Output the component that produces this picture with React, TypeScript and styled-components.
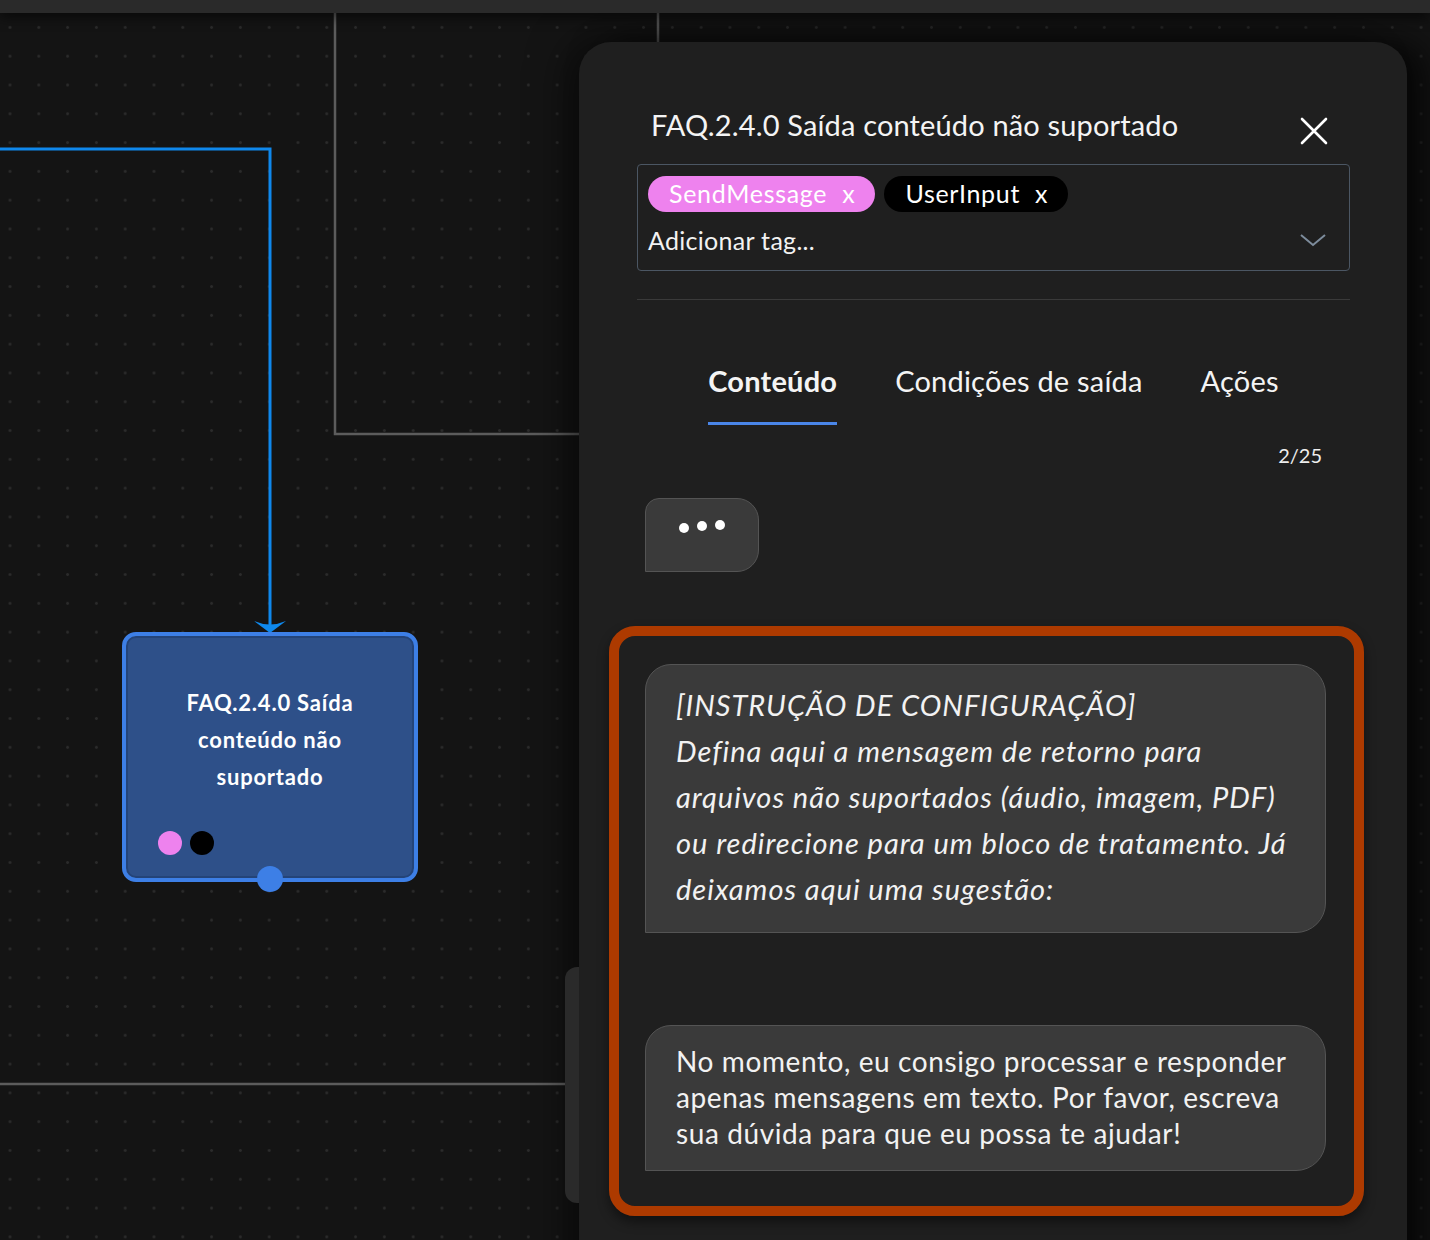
import React from 'react';
import styled, { createGlobalStyle } from 'styled-components';

const GlobalStyle = createGlobalStyle`
  body {
    margin: 0;
    background: #141414;
    font-family: Lato, "Noto Sans", sans-serif;
    color: #ffffff;
  }
`;

const Screen = styled.div`
  width: 1430px;
  height: 1240px;
  display: flex;
  flex-direction: column;
  overflow: hidden;
  position: relative;
`;

const TopBar = styled.div`
  height: 13px;
  flex-shrink: 0;
  background: #2a2a2a;
  box-shadow: 0 3px 14px rgba(0, 0, 0, 0.7);
  z-index: 2;
`;

const Canvas = styled.div`
  flex: 1;
  position: relative;
  background-color: #141414;
  background-image: radial-gradient(circle, #2b2b2b 1.2px, transparent 1.6px);
  background-size: 28.8px 28.8px;
  background-position: -4.4px 0px;
`;

const EdgeLayer = styled.svg`
  position: absolute;
  left: 0;
  top: 0;
  width: 1430px;
  height: 1227px;
`;

const FlowNode = styled.div`
  position: absolute;
  left: 122px;
  top: 619px;
  width: 296px;
  height: 250px;
  box-sizing: border-box;
  border: 4px solid #3d7fe6;
  border-radius: 14px;
  background: #2e5089;
  box-shadow: inset 0 0 0 2px rgba(30, 60, 110, 0.6);
  display: flex;
  flex-direction: column;
  align-items: center;
  padding: 48px 20px 0;
`;

const NodeTitle = styled.div`
  font-weight: 700;
  font-size: 22px;
  letter-spacing: 0.8px;
  line-height: 37px;
  text-align: center;
  width: 220px;
`;

const NodeTags = styled.div`
  position: absolute;
  left: 32px;
  bottom: 23px;
  display: flex;
  gap: 8px;
`;

const TagDot = styled.span<{ $color: string }>`
  width: 24px;
  height: 24px;
  border-radius: 50%;
  background: ${(p) => p.$color};
`;

const NodeHandle = styled.span`
  position: absolute;
  left: 50%;
  bottom: -14px;
  margin-left: -13px;
  width: 26px;
  height: 26px;
  border-radius: 50%;
  background: #3d7fe6;
`;

const Drawer = styled.aside`
  position: absolute;
  left: 579px;
  top: 29px;
  width: 828px;
  height: 1260px;
  box-sizing: border-box;
  background: #1f1f1f;
  border-radius: 32px 32px 0 0;
  box-shadow: -10px 0 40px rgba(0, 0, 0, 0.55), 20px 0 30px rgba(0, 0, 0, 0.6);
  padding: 0 57px 0 58px;
  display: flex;
  flex-direction: column;
`;

const DrawerHandle = styled.div`
  position: absolute;
  left: -14px;
  top: 925px;
  width: 14px;
  height: 236px;
  background: #2a2a2a;
  border-radius: 12px 0 0 12px;
`;

const Header = styled.div`
  margin-top: 64px;
  height: 38px;
  display: flex;
  align-items: center;
  justify-content: space-between;
  padding-left: 14px;
  padding-right: 22px;
`;

const Title = styled.h2`
  margin: 0;
  font-weight: 400;
  font-size: 29px;
  letter-spacing: 0.15px;
  line-height: 38px;
  color: #f4f4f4;
`;

const CloseButton = styled.button`
  border: 0;
  background: none;
  padding: 0;
  margin-top: 12px;
  width: 28px;
  height: 28px;
  display: flex;
  cursor: pointer;
`;

const TagBox = styled.div`
  margin-top: 20px;
  height: 107px;
  box-sizing: border-box;
  border: 1px solid #4b5663;
  border-radius: 4px;
  padding: 11px 22px 0 10px;
  display: flex;
  flex-direction: column;
`;

const TagRow = styled.div`
  display: flex;
  gap: 9px;
`;

const Tag = styled.span<{ $bg: string }>`
  height: 36px;
  border-radius: 18px;
  background: ${(p) => p.$bg};
  padding: 0 20px 0 21px;
  display: inline-flex;
  align-items: center;
  gap: 15px;
  font-size: 25px;
  letter-spacing: 0.7px;
  line-height: 30px;
  color: #ffffff;
  padding-bottom: 3px;
  box-sizing: border-box;
`;

const InputRow = styled.div`
  margin-top: 10px;
  height: 36px;
  display: flex;
  align-items: center;
  justify-content: space-between;
  font-size: 25px;
  letter-spacing: 0.3px;
  color: #f2f2f2;
`;

const Divider = styled.hr`
  margin: 28px 0 0;
  border: 0;
  height: 1px;
  background: #3a3a3a;
`;

const Tabs = styled.nav`
  margin-top: 63px;
  display: flex;
  justify-content: center;
  gap: 58px;
`;

const TabItem = styled.span<{ $active?: boolean }>`
  font-size: 29px;
  letter-spacing: 0.2px;
  line-height: 36px;
  font-weight: ${(p) => (p.$active ? 700 : 400)};
  color: #f4f4f4;
  padding-bottom: 23px;
  border-bottom: 3px solid ${(p) => (p.$active ? '#4a86e8' : 'transparent')};
`;

const Counter = styled.div`
  margin-top: 18px;
  align-self: flex-end;
  margin-right: 28px;
  font-size: 20px;
  line-height: 24px;
  color: #eeeeee;
`;

const TypingBubble = styled.div`
  margin-top: 31px;
  margin-left: 8px;
  width: 114px;
  height: 74px;
  box-sizing: border-box;
  background: #3a3a3a;
  border: 1px solid #545454;
  border-radius: 14px 22px 22px 0;
  display: flex;
  justify-content: center;
  gap: 8px;
  padding-top: 20px;
`;

const TypingDot = styled.span<{ $lift: number }>`
  width: 10px;
  height: 10px;
  border-radius: 50%;
  background: #ffffff;
  margin-top: ${(p) => 4 - p.$lift}px;
`;

const Frame = styled.section`
  margin-top: 54px;
  margin-left: -28px;
  width: 755px;
  box-sizing: border-box;
  border: 10px solid #ad3a00;
  border-radius: 26px;
  padding: 28px 28px 35px 26px;
  box-shadow: 0 6px 12px rgba(0, 0, 0, 0.45);
  display: flex;
  flex-direction: column;
  gap: 92px;
`;

const Bubble = styled.div<{ $italic?: boolean }>`
  box-sizing: border-box;
  background: #3a3a3a;
  border: 1px solid #545454;
  border-radius: 26px 30px 30px 0;
  padding: ${(p) => (p.$italic ? '17px 20px 20px 30px' : '17px 20px 19px 30px')};
  font-size: ${(p) => (p.$italic ? '29px' : '28px')};
  letter-spacing: ${(p) => (p.$italic ? '1px' : '0.6px')};
  line-height: ${(p) => (p.$italic ? '46px' : '36px')};
  font-style: ${(p) => (p.$italic ? 'italic' : 'normal')};
  color: #f2f2f2;
  white-space: nowrap;
`;

export default function App() {
  return (
    <Screen>
      <GlobalStyle />
      <TopBar />
      <Canvas>
        <EdgeLayer viewBox="0 13 1430 1227">
          <polyline points="335,13 335,434 579,434" fill="none" stroke="#5c5c5c" strokeWidth="2.5" />
          <line x1="658" y1="13" x2="658" y2="42" stroke="#5c5c5c" strokeWidth="2.5" />
          <line x1="0" y1="1084" x2="566" y2="1084" stroke="#5c5c5c" strokeWidth="2.5" />
          <polyline points="0,149 270,149 270,628" fill="none" stroke="#0f88ec" strokeWidth="3" />
          <path d="M254,621 Q270,628 286,621 L270,633 Z" fill="#0f88ec" />
        </EdgeLayer>

        <FlowNode>
          <NodeTitle>FAQ.2.4.0 Saída conteúdo não suportado</NodeTitle>
          <NodeTags>
            <TagDot $color="#ee82ee" />
            <TagDot $color="#000000" />
          </NodeTags>
          <NodeHandle />
        </FlowNode>

        <Drawer>
          <DrawerHandle />
          <Header>
            <Title>FAQ.2.4.0 Saída conteúdo não suportado</Title>
            <CloseButton aria-label="Fechar">
              <svg width="28" height="28" viewBox="0 0 28 28">
                <path d="M2 2 L26 26 M26 2 L2 26" stroke="#ffffff" strokeWidth="2.6" strokeLinecap="round" />
              </svg>
            </CloseButton>
          </Header>

          <TagBox>
            <TagRow>
              <Tag $bg="#ee82ee">
                SendMessage <span>x</span>
              </Tag>
              <Tag $bg="#000000">
                UserInput <span>x</span>
              </Tag>
            </TagRow>
            <InputRow>
              <span>Adicionar tag...</span>
              <svg width="28" height="14" viewBox="0 0 28 14">
                <polyline points="2,2 14,12 26,2" fill="none" stroke="#7d8c9c" strokeWidth="2" />
              </svg>
            </InputRow>
          </TagBox>

          <Divider />

          <Tabs>
            <TabItem $active>Conteúdo</TabItem>
            <TabItem>Condições de saída</TabItem>
            <TabItem>Ações</TabItem>
          </Tabs>

          <Counter>2/25</Counter>

          <TypingBubble>
            <TypingDot $lift={0} />
            <TypingDot $lift={2} />
            <TypingDot $lift={3} />
          </TypingBubble>

          <Frame>
            <Bubble $italic>
              [INSTRUÇÃO DE CONFIGURAÇÃO]
              <br />
              Defina aqui a mensagem de retorno para
              <br />
              arquivos não suportados (áudio, imagem, PDF)
              <br />
              ou redirecione para um bloco de tratamento. Já
              <br />
              deixamos aqui uma sugestão:
            </Bubble>
            <Bubble>
              No momento, eu consigo processar e responder
              <br />
              apenas mensagens em texto. Por favor, escreva
              <br />
              sua dúvida para que eu possa te ajudar!
            </Bubble>
          </Frame>
        </Drawer>
      </Canvas>
    </Screen>
  );
}
